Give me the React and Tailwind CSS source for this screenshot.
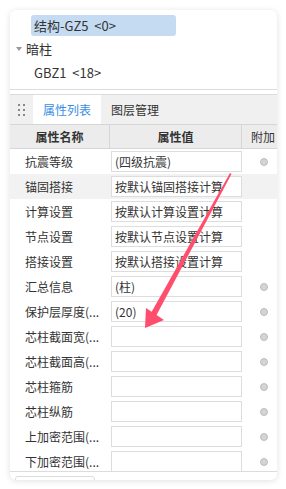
import React from 'react';

const rows = [
  { name: '抗震等级', value: '(四级抗震)', radio: true },
  { name: '锚固搭接', value: '按默认锚固搭接计算', radio: false, active: true },
  { name: '计算设置', value: '按默认计算设置计算', radio: false },
  { name: '节点设置', value: '按默认节点设置计算', radio: false },
  { name: '搭接设置', value: '按默认搭接设置计算', radio: false },
  { name: '汇总信息', value: '(柱)', radio: true },
  { name: '保护层厚度(...', value: '(20)', radio: true },
  { name: '芯柱截面宽(...', value: '', radio: true },
  { name: '芯柱截面高(...', value: '', radio: true },
  { name: '芯柱箍筋', value: '', radio: true },
  { name: '芯柱纵筋', value: '', radio: true },
  { name: '上加密范围(...', value: '', radio: true },
  { name: '下加密范围(...', value: '', radio: true },
];

export default function App() {
  return (
    <div
      className="relative w-[286px] h-[489px] bg-white pt-[10px] pl-[10px] overflow-hidden text-[12px] text-[#333]"
      style={{ fontFamily: '"Microsoft YaHei", "Noto Sans CJK SC", sans-serif' }}
    >
      <div className="w-[267px] h-[470px] bg-white rounded-[6px] shadow-[0_1px_6px_rgba(0,0,0,0.12)] overflow-hidden flex flex-col">
        {/* Tree */}
        <div className="shrink-0 h-[80px] border-b border-[#dcdcdc] flex flex-col text-[13px]">
          <div className="mt-[5px] ml-[21px] w-[145px] h-[21px] rounded-[3px] bg-[#c5dbf1] flex items-center pl-[3px] leading-none whitespace-pre">
            结构-GZ5  &lt;0&gt;
          </div>
          <div className="h-[26px] flex items-center">
            <span className="ml-[6px] w-0 h-0 border-l-[3px] border-r-[3px] border-t-[4px] border-l-transparent border-r-transparent border-t-[#999]" />
            <span className="ml-[4px]">暗柱</span>
          </div>
          <div className="h-[21px] flex items-center pl-[24px] whitespace-pre">GBZ1  &lt;18&gt;</div>
        </div>
        <div className="shrink-0 h-[5px] border-b border-[#dcdcdc]" />

        {/* Tabs */}
        <div className="shrink-0 h-[29px] bg-[#f0f0f0] flex items-stretch">
          <div className="w-[23px] flex items-center justify-center">
            <div className="grid grid-cols-2 gap-x-[3px] gap-y-[3px]">
              {Array.from({ length: 6 }).map((_, i) => (
                <span key={i} className="w-[2px] h-[2px] bg-[#888]" />
              ))}
            </div>
          </div>
          <div className="w-[68px] bg-white flex items-center justify-center text-[#3a8ee6]">属性列表</div>
          <div className="flex items-center pl-[10px]">图层管理</div>
        </div>

        {/* Header */}
        <div className="shrink-0 h-[25px] bg-[#ececec] border-t border-b border-[#d6d6d6] flex font-bold">
          <div className="w-[100px] border-r border-[#d6d6d6] flex items-center justify-center">属性名称</div>
          <div className="w-[132px] border-r border-[#d6d6d6] flex items-center justify-center">属性值</div>
          <div className="flex-1 flex items-center pl-[9px] font-normal whitespace-nowrap overflow-hidden">附加</div>
        </div>

        {/* Rows */}
        <div className="shrink-0 h-[323px] overflow-hidden border-b border-[#dcdcdc]">
          {rows.map((r) => (
            <div key={r.name} className={`h-[25px] flex items-center ${r.active ? 'bg-[#f2f2f2]' : ''}`}>
              <div className="w-[101px] pl-[15px] whitespace-nowrap overflow-hidden">{r.name}</div>
              <div className="w-[131px] h-[21px] bg-white border border-[#dddddd] flex items-center pl-[3px] whitespace-nowrap overflow-hidden">
                {r.value}
              </div>
              <div className="flex-1 flex justify-center pl-[8px]">
                {r.radio && <span className="w-[8px] h-[8px] rounded-full bg-[#d4d4d4] border border-[#bdbdbd]" />}
              </div>
            </div>
          ))}
        </div>

        <div className="flex-1 pl-[5px] pt-[4px]">
          <div className="w-[80px] h-[20px] border border-[#dcdcdc] rounded-[3px]" />
        </div>
      </div>

      {/* Annotation arrow */}
      <svg className="absolute left-0 top-0 pointer-events-none" width="286" height="489" viewBox="0 0 286 489">
        <polygon points="230,173 231.5,174 156,316 151,313" fill="#ff4d6d" />
        <polygon points="145,328 146,308 164,320" fill="#ff4d6d" />
      </svg>
    </div>
  );
}
